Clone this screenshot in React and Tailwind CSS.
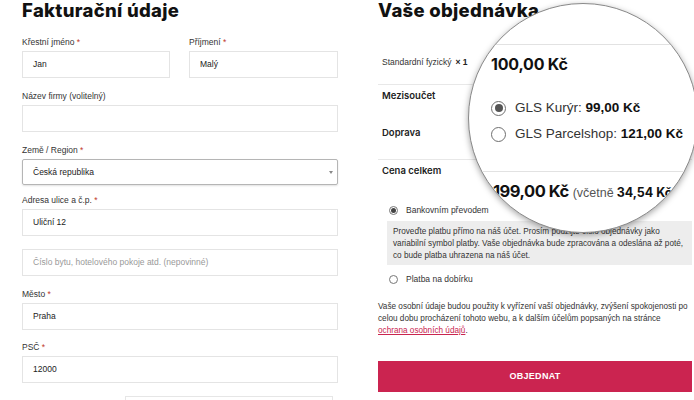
const Req = () => <span className="text-[#c0392b]"> *</span>;

function Label({ children, req }) {
  return (
    <div className="text-[8.5px] leading-[12px] text-[#333]">
      {children}
      {req && <Req />}
    </div>
  );
}

function Input({ value, placeholder, className = "" }) {
  return (
    <div
      className={`h-[27px] border border-[#e4e4e4] flex items-center px-[10px] text-[8.5px] ${
        value ? "text-[#222]" : "text-[#999]"
      } ${className}`}
    >
      {value || placeholder}
    </div>
  );
}

function Radio({ checked, size = "sm" }) {
  if (size === "lg") {
    return (
      <span className="w-[15px] h-[15px] rounded-full border-[1.5px] border-[#6e6e6e] flex items-center justify-center shrink-0 bg-white">
        {checked && <span className="w-[8px] h-[8px] rounded-full bg-[#555]" />}
      </span>
    );
  }
  return (
    <span className="w-[9px] h-[9px] rounded-full border border-[#777] flex items-center justify-center shrink-0 bg-white">
      {checked && <span className="w-[5px] h-[5px] rounded-full bg-[#444]" />}
    </span>
  );
}

export default function App() {
  return (
    <div className="relative w-[694px] h-[400px] overflow-hidden bg-white font-['Liberation_Sans',Arial,sans-serif] text-[#333]">
      <div className="flex">
        {/* LEFT */}
        <div className="w-[316px] ml-[22px] flex flex-col">
          <h1 className="font-['Inter',sans-serif] font-extrabold text-[18.5px] leading-[21px] text-[#111] tracking-[0.3px]">
            Fakturační údaje
          </h1>
          <div className="flex gap-[19px] mt-[15px]">
            <div className="w-[148px] flex flex-col gap-[3px]">
              <Label req>Křestní jméno</Label>
              <Input value="Jan" />
            </div>
            <div className="w-[149px] flex flex-col gap-[3px]">
              <Label req>Příjmení</Label>
              <Input value="Malý" />
            </div>
          </div>
          <div className="flex flex-col gap-[3px] mt-[12px]">
            <Label>Název firmy (volitelný)</Label>
            <Input />
          </div>
          <div className="flex flex-col gap-[3px] mt-[12px]">
            <Label req>Země / Region</Label>
            <div className="h-[26px] border border-[#b5b5b5] rounded-[2px] shadow-[0_1px_2px_rgba(0,0,0,0.12)] flex items-center justify-between pl-[10px] pr-[4px] text-[8.5px] text-[#222]">
              <span>Česká republika</span>
              <span className="w-0 h-0 border-l-[2.5px] border-r-[2.5px] border-t-[3px] border-l-transparent border-r-transparent border-t-[#888]" />
            </div>
          </div>
          <div className="flex flex-col gap-[3px] mt-[9px]">
            <Label req>Adresa ulice a č.p.</Label>
            <Input value="Uliční 12" />
          </div>
          <Input className="mt-[13px]" placeholder="Číslo bytu, hotelového pokoje atd. (nepovinné)" />
          <div className="flex flex-col gap-[3px] mt-[12px]">
            <Label req>Město</Label>
            <Input value="Praha" />
          </div>
          <div className="flex flex-col gap-[3px] mt-[11px]">
            <Label req>PSČ</Label>
            <Input value="12000" />
          </div>
          <div className="ml-[103px] w-[208px] h-[12px] mt-[13px] border border-b-0 border-[#e6e6e6]" />
        </div>

        {/* RIGHT */}
        <div className="w-[314px] ml-[40px] flex flex-col">
          <h1 className="font-['Inter',sans-serif] font-extrabold text-[18.5px] leading-[21px] text-[#111] tracking-[0.3px]">
            Vaše objednávka
          </h1>
          <div className="mt-[20px] h-[44px] border-b border-[#e8e8e8] flex items-center pl-[4px] text-[8.5px] text-[#333]">
            <span>Standardní fyzický</span>
            <span className="font-bold ml-[4px] text-[#222]">× 1</span>
          </div>
          <div className="flex flex-col pl-[4px] pt-[5px] pb-[20px] border-b border-[#e8e8e8] font-['Inter',sans-serif] font-semibold text-[9.5px] leading-[12px] text-[#222]">
            <span>Mezisoučet</span>
            <span className="mt-[25px]">Doprava</span>
          </div>
          <div className="pl-[4px] pt-[5px] font-['Inter',sans-serif] font-semibold text-[9.5px] leading-[12px] text-[#222]">
            Cena celkem
          </div>

          <div className="mt-[27px] flex items-center h-[12px] pl-[11px] gap-[8px] text-[8.5px]">
            <Radio checked />
            <span>Bankovním převodem</span>
          </div>
          <div className="mt-[5px] ml-[9px] bg-[#ededed] pl-[6px] pr-[4px] pt-[5px] pb-[3px] text-[8.2px] leading-[12px] text-[#333]">
            Proveďte platbu přímo na náš účet. Prosím použijte číslo objednávky jako variabilní symbol platby. Vaše objednávka bude zpracována a odeslána až poté, co bude platba uhrazena na náš účet.
          </div>
          <div className="mt-[8px] flex items-center h-[12px] pl-[11px] gap-[8px] text-[8.5px]">
            <Radio />
            <span>Platba na dobírku</span>
          </div>
          <p className="mt-[16px] text-[8.2px] leading-[12px] text-[#333]">
            Vaše osobní údaje budou použity k vyřízení vaší objednávky, zvýšení spokojenosti po celou dobu procházení tohoto webu, a k dalším účelům popsaných na stránce{" "}
            <span className="text-[#c9254f] underline">ochrana osobních údajů</span>.
          </p>
          <button className="mt-[24px] h-[31px] w-full bg-[#cb2450] text-white font-bold text-[9px] tracking-[0.3px]">
            OBJEDNAT
          </button>
        </div>
      </div>

      {/* MAGNIFIER */}
      <div className="absolute left-[468px] top-[3px] w-[230px] h-[230px] rounded-full overflow-hidden bg-white border border-[#8a8a8a] shadow-[0_2px_6px_rgba(0,0,0,0.35)]">
        <div className="absolute left-0 right-0 top-[40px] h-px bg-[#e2e2e2]" />
        <div className="absolute left-[22px] top-[50px] font-['Inter',sans-serif] font-bold text-[16px] leading-[20px] text-[#111] tracking-[-0.2px]">
          100,00 Kč
        </div>
        <div className="absolute left-[22px] top-[96px] flex items-center gap-[9px] h-[16px] text-[13.5px] text-[#333]">
          <Radio checked size="lg" />
          <span>
            GLS Kurýr: <b className="text-[#111]">99,00 Kč</b>
          </span>
        </div>
        <div className="absolute left-[22px] top-[122px] flex items-center gap-[9px] h-[16px] text-[13.5px] text-[#333]">
          <Radio size="lg" />
          <span className="whitespace-nowrap">
            GLS Parcelshop: <b className="text-[#111]">121,00 Kč</b>
          </span>
        </div>
        <div className="absolute left-0 right-0 top-[167px] h-px bg-[#e2e2e2]" />
        <div className="absolute left-[24px] top-[177px] whitespace-nowrap flex items-baseline leading-[20px]">
          <span className="font-['Inter',sans-serif] font-bold text-[16.5px] text-[#111] tracking-[-0.5px]">199,00 Kč</span>
          <span className="ml-[4px] text-[12.5px] text-[#555]">(včetně</span>
          <span className="ml-[3px] font-['Inter',sans-serif] font-bold text-[12.5px] text-[#111]">34,54 Kč</span>
        </div>
      </div>
    </div>
  );
}
